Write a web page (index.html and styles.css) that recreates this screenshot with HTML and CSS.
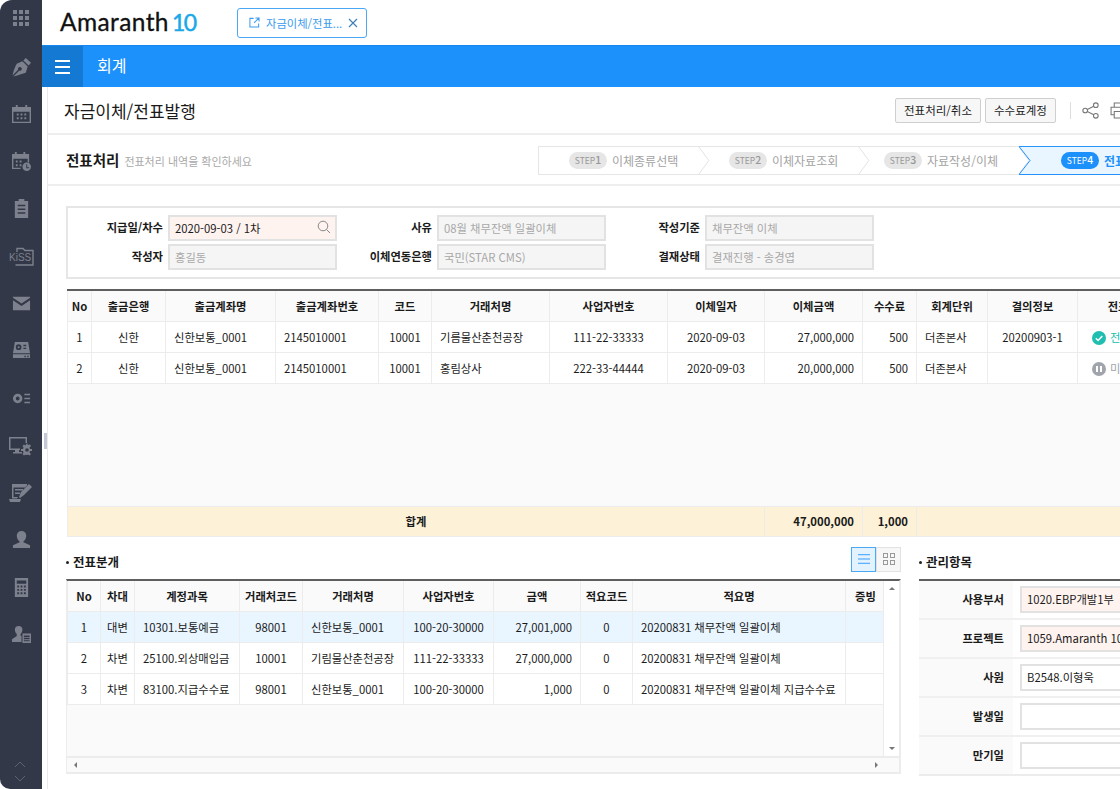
FILE: index.html
```html
<!DOCTYPE html>
<html lang="ko">
<head>
<meta charset="utf-8">
<title>자금이체/전표발행</title>
<link rel="stylesheet" href="styles.css">
</head>
<body>
<div class="app">
  <!-- left icon rail -->
  <nav class="side">
    <svg class="ico first" viewBox="0 0 16 16"><g><rect x="0" y="0" width="4" height="4"/><rect x="6" y="0" width="4" height="4"/><rect x="12" y="0" width="4" height="4"/><rect x="0" y="6" width="4" height="4"/><rect x="6" y="6" width="4" height="4"/><rect x="12" y="6" width="4" height="4"/><rect x="0" y="12" width="4" height="4"/><rect x="6" y="12" width="4" height="4"/><rect x="12" y="12" width="4" height="4"/></g></svg>
    <svg class="ico big" viewBox="0 0 20 20"><path d="M14.500 0L20 5l-2.500 3L12 2.500z"/><path d="M11 3.500l5.500 5.500-2 6.500C10 17 5.500 18.500 1.500 19.500l6-6.200a2 2 0 1 0-1-1l-6 6.200C1.500 14 3 9 5 6z"/></svg>
    <svg class="ico big" viewBox="0 0 20 20"><path fill-rule="evenodd" d="M4 0h2v2h8V0h2v2h4v17H0V2h4zM1.500 7v10.500h17V7z"/><path d="M5 9h2v2H5zM9 9h2v2H9zM13 9h2v2h-2zM5 13h2v2H5zM9 13h2v2H9zM13 13h2v2h-2z"/></svg>
    <svg class="ico big" viewBox="0 0 20 20"><path fill-rule="evenodd" d="M3 0h2v2h7V0h2v2h4v9h-1.500V7h-15v9.500H9V18H0V2h3z"/><path d="M4 9h2v2H4zM8 9h2v2H8zM4 13h2v2H4zM8 13h2v2H8z"/><circle cx="15.500" cy="15.500" r="4.500"/><path d="M15 13h1v3h2v1h-3z" fill="#323848"/></svg>
    <svg class="ico big" viewBox="0 0 20 20"><path fill-rule="evenodd" d="M7 0h6v2h4v18H3V2h4zM6 6v1.500h8V6zM6 10v1.500h8V10zM6 14v1.500h8V14z"/></svg>
    <svg class="ico kiss" viewBox="0 0 25 20"><path class="line" d="M8 5V1.500h6l2 2h8V18H6.500"/><text x="0" y="14" font-size="10" font-family="Liberation Sans, sans-serif">KiSS</text></svg>
    <svg class="ico big" viewBox="0 0 20 20"><path d="M1 3h18v1l-9 6-9-6zM1 6.500l9 6 9-6V17H1z"/></svg>
    <svg class="ico big" viewBox="0 0 20 20"><path fill-rule="evenodd" d="M3 1h14l2 12H1zM7 3.500a3 3 0 1 0 0 6 3 3 0 0 0 0-6zM12 4v1.500h3V4zM12 7v1.500h3V7z"/><circle cx="7" cy="6.500" r="1"/><path fill-rule="evenodd" d="M1 14h18v4H1zM13 15.500v1.500h1.500v-1.500zM16 15.500v1.500h1.500v-1.500z"/></svg>
    <svg class="ico big" viewBox="0 0 20 20"><path fill-rule="evenodd" d="M6 5a5 5 0 1 1 0 10A5 5 0 0 1 6 5zm0 3a2 2 0 1 0 0 4 2 2 0 0 0 0-4z"/><path d="M13 5h6v1.500h-6zM13 9.200h6v1.500h-6zM13 13.500h6V15h-6z"/></svg>
    <svg class="ico wide" viewBox="0 0 24 20"><path d="M0 1h18v6h-1.500V2.500h-15v10H11V14H0z"/><path d="M6 14h4v2h3v1.500H4V16h2z"/><path d="M18 7l1 2 2-.5 1 1.500-1.500 1.500.5 1.500H23v2h-2l-.5 1.500L22 18l-1.500 1.500-1.500-1-1 .5-1 0-.5-.5-1.500 1L13.500 18l1-1.500-.5-1.500h-2v-2h2l.5-1.500L13.500 10l1.500-1.500 1.500 1z"/><circle cx="18" cy="14" r="1.800" fill="#323848"/></svg>
    <svg class="ico wide" viewBox="0 0 24 20"><path d="M3 1h15v1.500l-2 2H4.500V14H9l-1 1.500H3zM6 6h8v1.500H6zM6 9.500h5V11H6z"/><path d="M20 1l3 3-8 8-4 3-1-1 2-5zM0 16h12l-1 3H1z"/></svg>
    <svg class="ico big" viewBox="0 0 20 20"><path d="M10 1a5 5 0 0 1 5 5c0 2.500-1.500 5-3 6v1l7 3v3H1v-3l7-3v-1C6.500 11 5 8.500 5 6a5 5 0 0 1 5-5z"/></svg>
    <svg class="ico big" viewBox="0 0 20 20"><path fill-rule="evenodd" d="M3 0h14v20H3zM5 2.500V6h10V2.500zM5.500 8v2h2V8zM9 8v2h2V8zm3.500 0v2h2V8zm-7 3.500v2h2v-2zm3.500 0v2h2v-2zm3.500 0v2h2v-2zm-7 3.500v2h2v-2zm3.500 0v2h2v-2zm3.500 0v2h2v-2z"/></svg>
    <svg class="ico big" viewBox="0 0 20 20"><path d="M7 1a4 4 0 0 1 4 4c0 2-1 3.500-2 4.500V11l1 .5V18H0v-3l5-3.500v-2C4 8.500 3 7 3 5a4 4 0 0 1 4-4z"/><path fill-rule="evenodd" d="M11 9h9v10h-9zm1.500 2v1.500h6V11zm0 2.500V15h6v-1.500zm0 2.500v1h6v-1z"/></svg>
    <div class="side-arrows">
      <svg viewBox="0 0 12 7"><path d="M1 6l5-5 5 5"/></svg>
      <svg viewBox="0 0 12 7"><path d="M1 1l5 5 5-5"/></svg>
    </div>
  </nav>

  <div class="main">
    <header class="top">
      <div class="logo">Amaranth<span class="logo-num">10</span></div>
      <div class="tab">
        <svg class="tab-ico" viewBox="0 0 12 12"><path d="M5 1.500H1v9.500h9.500V7M7 1h4v4M11 1L5.500 6.500"/></svg>
        <span>자금이체/전표...</span>
        <svg class="tab-x" viewBox="0 0 10 10"><path d="M1 1l8 8M9 1l-8 8"/></svg>
      </div>
    </header>
    <div class="bluebar">
      <div class="menu-btn"><i></i><i></i><i></i></div>
      <div class="bar-title">회계</div>
    </div>

    <div class="content">
      <div class="handle"></div>
      <div class="title-row">
        <h1>자금이체/전표발행</h1>
        <div class="title-tools">
          <button class="btn">전표처리/취소</button>
          <button class="btn">수수료계정</button>
          <span class="divider"></span>
          <svg class="tool" viewBox="0 0 16 16"><circle cx="3" cy="8" r="2.200"/><circle cx="13" cy="3" r="2.200"/><circle cx="13" cy="13" r="2.200"/><path d="M5 7l6-3M5 9l6 3"/></svg>
          <svg class="tool" viewBox="0 0 16 16"><path d="M4 5V1h8v4M4 12H1V5h14v7h-3M4 9h8v6H4z"/></svg>
        </div>
      </div>

      <div class="step-row">
        <div class="step-head"><strong>전표처리</strong><span>전표처리 내역을 확인하세요</span></div>
        <ol class="steps">
          <li class="step"><b class="pill"><small>STEP</small>1</b><span>이체종류선택</span><svg class="chev" viewBox="0 0 12 30"><path d="M0 0l11 15L0 30"/></svg></li>
          <li class="step"><b class="pill"><small>STEP</small>2</b><span>이체자료조회</span><svg class="chev" viewBox="0 0 12 30"><path d="M0 0l11 15L0 30"/></svg></li>
          <li class="step third"><b class="pill"><small>STEP</small>3</b><span>자료작성/이체</span><svg class="chev" viewBox="0 0 12 30"><path d="M0 0l11 15L0 30"/></svg></li>
          <li class="step on"><svg class="step-bg" viewBox="0 0 120 30" preserveAspectRatio="none"><path d="M0 .5h120v29H0l11-14.500z"/></svg><b class="pill"><small>STEP</small>4</b><span>전표처리</span></li>
        </ol>
      </div>

      <div class="body">
        <form class="search">
          <label>지급일/차수</label><div class="field req">2020-09-03 / 1차<svg class="mag" viewBox="0 0 14 14"><circle cx="6" cy="6" r="4.800"/><path d="M9.500 9.500L13 13"/></svg></div>
          <label>사유</label><div class="field off">08월 채무잔액 일괄이체</div>
          <label>작성기준</label><div class="field off">채무잔액 이체</div>
          <label>작성자</label><div class="field off">홍길동</div>
          <label>이체연동은행</label><div class="field off">국민(STAR CMS)</div>
          <label>결재상태</label><div class="field off">결재진행 - 송경엽</div>
        </form>

        <div class="tb-wrap upper">
          <table class="tb">
            <colgroup><col style="width:24px"><col style="width:74px"><col style="width:110px"><col style="width:103px"><col style="width:53px"><col style="width:118px"><col style="width:118px"><col style="width:97px"><col style="width:98px"><col style="width:54px"><col style="width:71px"><col style="width:90px"><col style="width:102px"></colgroup>
            <tr><th>No</th><th>출금은행</th><th>출금계좌명</th><th>출금계좌번호</th><th>코드</th><th>거래처명</th><th>사업자번호</th><th>이체일자</th><th>이체금액</th><th>수수료</th><th>회계단위</th><th>결의정보</th><th>전표처리</th></tr>
            <tr><td class="c">1</td><td class="c">신한</td><td>신한보통_0001</td><td>2145010001</td><td class="c">10001</td><td>기름물산춘천공장</td><td class="c">111-22-33333</td><td class="c">2020-09-03</td><td class="r">27,000,000</td><td class="r">500</td><td>더존본사</td><td class="c">20200903-1</td>
              <td class="st ok"><svg viewBox="0 0 14 14"><circle cx="7" cy="7" r="7"/><path d="M3.800 7.200l2.300 2.300 4.200-4.500"/></svg>전표처리</td></tr>
            <tr><td class="c">2</td><td class="c">신한</td><td>신한보통_0001</td><td>2145010001</td><td class="c">10001</td><td>홍림상사</td><td class="c">222-33-44444</td><td class="c">2020-09-03</td><td class="r">20,000,000</td><td class="r">500</td><td>더존본사</td><td></td>
              <td class="st wait"><svg viewBox="0 0 14 14"><circle cx="7" cy="7" r="7"/><path d="M5 4v6M9 4v6"/></svg>미처리</td></tr>
            <tr class="blank"><td colspan="13"></td></tr>
            <tr class="total"><td colspan="8" class="c">합계</td><td class="r">47,000,000</td><td class="r">1,000</td><td colspan="3"></td></tr>
          </table>
        </div>

        <div class="lower">
          <section class="left-pane">
            <div class="sec-head">
              <h2>전표분개</h2>
              <div class="views">
                <span class="view on"><svg viewBox="0 0 14 12"><path d="M0 1h14M0 6h14M0 11h14"/></svg></span>
                <span class="view"><svg viewBox="0 0 12 12"><rect x=".5" y=".5" width="4" height="4"/><rect x="7.500" y=".5" width="4" height="4"/><rect x=".5" y="7.500" width="4" height="4"/><rect x="7.500" y="7.500" width="4" height="4"/></svg></span>
              </div>
            </div>
            <div class="grid-box">
              <div class="grid-top">
                <div class="grid-area">
                  <table class="tb">
                    <colgroup><col style="width:33px"><col style="width:34px"><col style="width:105px"><col style="width:63px"><col style="width:101px"><col style="width:90px"><col style="width:87px"><col style="width:52px"><col style="width:213px"><col style="width:40px"></colgroup>
                    <tr><th>No</th><th>차대</th><th>계정과목</th><th>거래처코드</th><th>거래처명</th><th>사업자번호</th><th>금액</th><th>적요코드</th><th>적요명</th><th>증빙</th></tr>
                    <tr class="sel"><td class="c">1</td><td class="c">대변</td><td>10301.보통예금</td><td class="c">98001</td><td>신한보통_0001</td><td class="c">100-20-30000</td><td class="r">27,001,000</td><td class="c">0</td><td>20200831 채무잔액 일괄이체</td><td></td></tr>
                    <tr><td class="c">2</td><td class="c">차변</td><td>25100.외상매입금</td><td class="c">10001</td><td>기림물산춘천공장</td><td class="c">111-22-33333</td><td class="r">27,000,000</td><td class="c">0</td><td>20200831 채무잔액 일괄이체</td><td></td></tr>
                    <tr><td class="c">3</td><td class="c">차변</td><td>83100.지급수수료</td><td class="c">98001</td><td>신한보통_0001</td><td class="c">100-20-30000</td><td class="r">1,000</td><td class="c">0</td><td>20200831 채무잔액 일괄이체 지급수수료</td><td></td></tr>
                  </table>
                </div>
                <div class="vscroll"><i class="tri up"></i><i class="tri down"></i></div>
              </div>
              <div class="hscroll"><i class="tri lf"></i><i class="tri rt"></i></div>
            </div>
          </section>

          <section class="right-pane">
            <div class="sec-head"><h2>관리항목</h2></div>
            <div class="manage">
              <div class="m-row"><label>사용부서</label><div class="field req">1020.EBP개발1부</div></div>
              <div class="m-row"><label>프로젝트</label><div class="field req">1059.Amaranth 10</div></div>
              <div class="m-row"><label>사원</label><div class="field">B2548.이형욱</div></div>
              <div class="m-row"><label>발생일</label><div class="field"></div></div>
              <div class="m-row"><label>만기일</label><div class="field"></div></div>
            </div>
          </section>
        </div>
      </div>
    </div>
  </div>
</div>
</body>
</html>
```

FILE: styles.css
```css
* { box-sizing: border-box; }
html, body {
    margin: 0;
    height: 100%;
    overflow: hidden;
    background: #fff;
}
body {
    font-family: "Noto Sans CJK KR", "Noto Sans", sans-serif;
    font-size: 11.3px;
    color: #1a1a1a;
}
.app {
    display: flex;
    width: 1120px;
    height: 789px;
    overflow: hidden;
}

/* left rail */
.side {
    width: 42px;
    flex: none;
    height: 789px;
    background: #323848;
    border-radius: 12px 0 0 10px;
    display: flex;
    flex-direction: column;
    align-items: center;
    position: relative;
}
.ico {
    flex: none;
    fill: #7d818d;
}
.ico.first {
    width: 16px;
    height: 16px;
    margin-top: 10px;
    margin-bottom: 31.5px;
}
.ico.big {
    width: 19px;
    height: 19px;
    margin-bottom: 28.3px;
}
.ico.wide {
    width: 24px;
    height: 20px;
    margin-bottom: 27.3px;
}
.ico.kiss {
    width: 25px;
    height: 20px;
    margin-bottom: 27.3px;
    font-weight: 400;
}
.ico .line {
    fill: none;
    stroke: #7d818d;
    stroke-width: 1.4;
}
.side-arrows {
    position: absolute;
    bottom: 7px;
    left: 14px;
    display: flex;
    flex-direction: column;
    gap: 7px;
}
.side-arrows svg {
    width: 12px;
    height: 7px;
    fill: none;
    stroke: #5d6372;
    stroke-width: 1;
    display: block;
}

.main {
    flex: 1;
    min-width: 0;
    display: flex;
    flex-direction: column;
}

/* top header */
.top {
    height: 45px;
    flex: none;
    display: flex;
    align-items: center;
    padding-left: 18px;
}
.logo {
    width: 177px;
    font-family: "Lato", sans-serif;
    font-size: 24.5px;
    letter-spacing: .4px;
    -webkit-text-stroke: .3px #111;
    color: #111;
    line-height: 1;
}
.logo-num {
    color: #1ca8e8;
    -webkit-text-stroke: .5px #1ca8e8;
    font-size: 23px;
    letter-spacing: -1.5px;
    margin-left: 3px;
}
.tab {
    width: 130px;
    height: 30px;
    border: 1px solid #4aa8f5;
    border-radius: 3px;
    color: #3a9bee;
    font-size: 11.3px;
    display: flex;
    align-items: center;
    padding-left: 11px;
    gap: 6px;
}
.tab-ico {
    width: 11px;
    height: 11px;
    fill: none;
    stroke: #3a9bee;
    stroke-width: 1.1;
}
.tab-x {
    width: 10px;
    height: 10px;
    fill: none;
    stroke: #3a7fb8;
    stroke-width: 1.1;
}

.bluebar {
    height: 42px;
    flex: none;
    background: #1c90fb;
    display: flex;
    align-items: center;
    border-top: 1px solid #1787ee;
}
.menu-btn {
    width: 41px;
    height: 41px;
    background: #1479d3;
    display: flex;
    flex-direction: column;
    justify-content: center;
    gap: 4px;
    padding-left: 13px;
}
.menu-btn i {
    display: block;
    width: 15px;
    height: 2px;
    background: #fff;
}
.bar-title {
    color: #fff;
    font-size: 16px;
    margin-left: 14px;
    padding-bottom: 4px;
}

.content {
    flex: 1;
    min-height: 0;
    margin-left: 5px;
    border-left: 1px solid #e9e9e9;
    position: relative;
}
.handle {
    position: absolute;
    left: -4px;
    top: 346px;
    width: 3px;
    height: 16px;
    background: #c3c9d4;
}

/* page title */
.title-row {
    height: 48px;
    border-bottom: 2px solid #eee;
    display: flex;
    align-items: center;
    justify-content: space-between;
    padding-left: 16px;
}
h1 {
    margin: 0;
    font-size: 17px;
    font-weight: 400;
}
.title-tools {
    display: flex;
    align-items: center;
    flex: none;
    width: 225px;
    gap: 4px;
    overflow: hidden;
}
.btn {
    height: 25px;
    flex: none;
    padding: 0 8px;
    background: #f7f7f7;
    border: 1px solid #cfcfcf;
    border-radius: 2px;
    font: inherit;
    font-size: 11.5px;
    color: #1a1a1a;
}
.divider {
    width: 1px;
    height: 17px;
    background: #ddd;
    margin-left: 10px;
    flex: none;
}
.tool {
    width: 17px;
    height: 17px;
    flex: none;
    fill: none;
    stroke: #777;
    stroke-width: 1;
    margin-left: 7px;
}

/* steps */
.step-row {
    height: 51px;
    border-bottom: 2px solid #eee;
    display: flex;
    align-items: center;
    padding-left: 18px;
}
.step-head {
    width: 472px;
    flex: none;
}
.step-head strong {
    font-size: 14.5px;
    font-weight: 700;
}
.step-head span {
    color: #a9a9a9;
    font-size: 11px;
    margin-left: 5px;
}
.steps {
    list-style: none;
    margin: 0;
    padding: 0;
    display: flex;
    width: 640px;
    flex: none;
    height: 29px;
    border: 1px solid #e6e6e6;
    border-right: none;
    margin-top: 1px;
    font-size: 12px;
}
.step {
    width: 160px;
    flex: none;
    display: flex;
    align-items: center;
    padding-left: 30px;
    gap: 5px;
    color: #a3a3a3;
    position: relative;
}
.step.third {
    padding-left: 25px;
}
.pill {
    display: inline-block;
    width: 38px;
    flex: none;
    height: 17px;
    line-height: 16px;
    border-radius: 9px;
    background: #e6e6e6;
    color: #979797;
    font-size: 10.5px;
    font-weight: 500;
    text-align: center;
}
.pill small {
    font-size: 8.5px;
    font-weight: 400;
}
.chev {
    position: absolute;
    right: -11px;
    top: -1px;
    width: 12px;
    height: 29px;
    fill: #fff;
    stroke: #e2e2e2;
    stroke-width: 1;
}
.step.on {
    color: #1c90fb;
    font-weight: 700;
    padding-left: 42px;
    white-space: nowrap;
}
.step.on .pill {
    background: #1c90fb;
    color: #fff;
}
.step.on .pill, .step.on span {
    position: relative;
}
.step-bg {
    position: absolute;
    left: 0;
    top: -1px;
    width: 120px;
    height: 29px;
    fill: #e9f5ff;
    stroke: #1c90fb;
    stroke-width: 1;
}

/* search form */
.body {
    padding: 20px 0 0 18px;
    width: 1090px;
}
.search {
    height: 73px;
    border: 2px solid #e6e6e6;
    padding-top: 7px;
    display: grid;
    grid-template-columns: 100px 169px 100px 169px 99px 169px;
    grid-auto-rows: 26px;
    row-gap: 3px;
}
.search label {
    text-align: right;
    padding-right: 5px;
    font-weight: 700;
    line-height: 24px;
}
.field {
    border: 2px solid #e2e2e2;
    padding-left: 5px;
    line-height: 22px;
    background: #fff;
    position: relative;
    white-space: nowrap;
    overflow: hidden;
}
.field.req { background: #fff3f0; }
.field.off {
    background: #f5f5f5;
    color: #a8a8a8;
}
.mag {
    position: absolute;
    right: 4px;
    top: 3px;
    width: 14px;
    height: 14px;
    fill: none;
    stroke: #888;
    stroke-width: 1;
}

/* tables */
.tb-wrap.upper {
    margin-top: 10px;
    margin-left: 1px;
}
.tb {
    table-layout: fixed;
    border-collapse: collapse;
    width: 100%;
    background: #fff;
}
.upper .tb { width: 1112px; }
.tb th, .tb td {
    height: 31px;
    padding: 0 8px;
    border: 1px solid #ececec;
    white-space: nowrap;
    overflow: hidden;
    font-weight: 400;
    text-align: left;
}
.tb tr:first-child th {
    border-top: 2px solid #5e5e5e;
    background: #fafafa;
    font-weight: 700;
    text-align: center;
    padding: 0;
}
.tb .c { text-align: center; padding: 0; }
.tb .r { text-align: right; }
.tb .blank td {
    height: 123px;
    background: #fafafa;
}
.tb .total td {
    height: 30px;
    background: #fdf1d8;
    font-weight: 700;
}
.tb .sel td { background: #e9f5ff; }
.st svg {
    width: 14px;
    height: 14px;
    vertical-align: -3px;
    margin-right: 4px;
    margin-left: 14px;
}
.tb .st { padding: 0; }
.ok { color: #20bdb1; }
.ok svg circle { fill: #20bdb1; }
.ok svg path { fill: none; stroke: #fff; stroke-width: 1.5; }
.wait { color: #a0a4ac; }
.wait svg circle { fill: #a0a4ac; }
.wait svg path { fill: none; stroke: #fff; stroke-width: 2; }

/* lower panes */
.lower {
    display: flex;
    gap: 18px;
}
.left-pane {
    width: 835px;
    flex: none;
}
.right-pane {
    width: 220px;
    flex: none;
}
.sec-head {
    height: 42px;
    display: flex;
    align-items: flex-end;
    justify-content: space-between;
    padding-bottom: 7px;
}
h2 {
    margin: 0;
    font-size: 12.5px;
    font-weight: 700;
    line-height: 20px;
}
h2::before {
    content: "";
    display: inline-block;
    width: 3px;
    height: 3px;
    border-radius: 50%;
    background: #222;
    vertical-align: 3px;
    margin-right: 4px;
}
.views {
    display: flex;
}
.view {
    width: 25px;
    height: 25px;
    border: 1px solid #e2e2e2;
    background: #f7f7f7;
    display: flex;
    align-items: center;
    justify-content: center;
}
.view svg {
    width: 12px;
    height: 12px;
    fill: none;
    stroke: #999;
    stroke-width: 1;
}
.view.on {
    border-color: #4aa8f5;
    background: #e3f2ff;
}
.view.on svg { stroke: #1c90fb; }

.grid-box {
    border-top: 2px solid #5e5e5e;
    border-left: 1px solid #ececec;
    border-right: 2px solid #ececec;
    border-bottom: 2px solid #ececec;
}
.grid-top {
    display: flex;
    height: 175px;
}
.grid-area {
    flex: 1;
    min-width: 0;
    background: #fafafa;
}
.grid-area .tb tr:first-child th { border-top: none; }
.vscroll {
    width: 16px;
    flex: none;
    background: #fff;
    border-left: 1px solid #ececec;
    display: flex;
    flex-direction: column;
    justify-content: space-between;
    align-items: center;
    padding: 6px 0;
}
.hscroll {
    height: 16px;
    border-top: 2px solid #ececec;
    background: #fafafa;
    display: flex;
    align-items: center;
    justify-content: space-between;
    padding: 0 21px 0 7px;
}
.tri {
    display: block;
    width: 0;
    height: 0;
    border: 3px solid transparent;
}
.tri.up { border-bottom-color: #777; border-top-width: 0; }
.tri.down { border-top-color: #777; border-bottom-width: 0; }
.tri.lf { border-right-color: #777; border-left-width: 0; }
.tri.rt { border-left-color: #777; border-right-width: 0; }

.manage {
    border-top: 2px solid #5e5e5e;
    border-bottom: 2px solid #ececec;
}
.m-row {
    height: 39px;
    display: grid;
    grid-template-columns: 101px 1fr;
    border-bottom: 2px solid #f0f0f0;
}
.m-row:last-child {
    border-bottom: none;
    height: 37px;
}
.m-row label {
    background: #fafafa;
    text-align: right;
    padding-right: 9px;
    font-weight: 700;
    line-height: 36px;
    margin-right: 7px;
}
.m-row .field {
    height: 27px;
    margin-top: 5px;
    line-height: 23px;
}
```
